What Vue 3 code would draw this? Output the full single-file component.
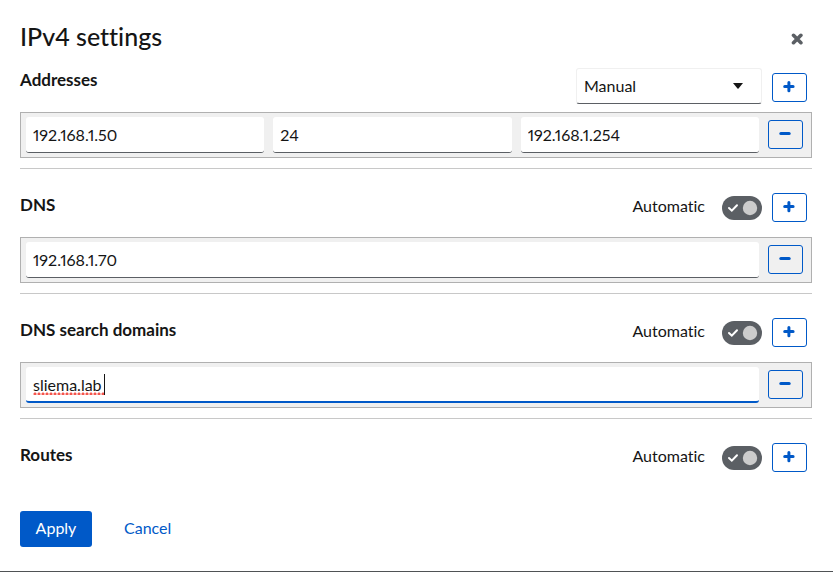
<script setup>
import { ref } from 'vue';

const method = ref('manual');

const sections = ref([
  {
    id: 'addresses',
    title: 'Addresses',
    rows: [[
      { label: 'Address', value: '192.168.1.50' },
      { label: 'Prefix length', value: '24' },
      { label: 'Gateway', value: '192.168.1.254' },
    ]],
  },
  { id: 'dns', title: 'DNS', auto: true, rows: [[{ label: 'DNS server', value: '192.168.1.70' }]] },
  {
    id: 'search',
    title: 'DNS search domains',
    auto: true,
    rows: [[{ label: 'Search domain', value: 'sliema.lab', editing: true }]],
  },
  { id: 'routes', title: 'Routes', auto: true, rows: [] },
]);

const addRow = (section) => {
  const count = section.id === 'addresses' ? 3 : 1;
  section.rows.push(Array.from({ length: count }, () => ({ label: section.title, value: '' })));
};

const removeRow = (section, index) => {
  section.rows.splice(index, 1);
};
</script>

<template>
  <form class="dialog" @submit.prevent>
    <header class="dialog-header">
      <h1>IPv4 settings</h1>
      <button type="button" class="btn-close" aria-label="Close">
        <svg viewBox="0 0 12 12" width="12" height="12" aria-hidden="true">
          <path d="M2.5 2.3 9.9 9.7M9.9 2.3 2.5 9.7" />
        </svg>
      </button>
    </header>

    <section v-for="section in sections" :key="section.id" :class="['section', section.id]">
      <div class="section-header">
        <h2>{{ section.title }}</h2>
        <select v-if="section.id === 'addresses'" v-model="method" aria-label="Address method">
          <option value="auto">Automatic</option>
          <option value="manual">Manual</option>
          <option value="shared">Shared</option>
          <option value="disabled">Disabled</option>
        </select>
        <label v-else class="switch">
          <span>Automatic</span>
          <span class="track">
            <input v-model="section.auto" type="checkbox" role="switch">
            <svg viewBox="0 0 40 24" width="40" height="24" aria-hidden="true">
              <path d="M7 12 9.8 14.7 15 9.3" />
              <circle cx="28" cy="12" r="7.2" />
            </svg>
          </span>
        </label>
        <button type="button" class="btn-icon" :aria-label="'Add ' + section.title" @click="addRow(section)">
          <svg viewBox="0 0 13 13" width="13" height="13" aria-hidden="true">
            <path d="M1.7 5.6H10.1M5.9 1.5V9.8" />
          </svg>
        </button>
      </div>

      <div v-for="(row, index) in section.rows" :key="index" class="row">
        <div v-for="(field, i) in row" :key="i" class="field">
          <input
            v-model="field.value"
            type="text"
            :class="{ editing: field.editing }"
            :aria-label="field.label"
          >
          <span v-if="field.editing" class="caret"></span>
        </div>
        <button type="button" class="btn-icon" aria-label="Remove item" @click="removeRow(section, index)">
          <svg viewBox="0 0 13 13" width="13" height="13" aria-hidden="true">
            <path d="M1.8 5.4H10.2" />
          </svg>
        </button>
      </div>
    </section>

    <footer class="dialog-footer">
      <button type="submit" class="btn-primary">Apply</button>
      <button type="button" class="btn-link">Cancel</button>
    </footer>
  </form>
</template>

<style>
body {
  background: #fff;
}
</style>

<style scoped>
* {
  box-sizing: border-box;
}

.dialog {
  padding: 20px 21px 24px 20px;
  border-bottom: 1px solid #4f5255;
  background: #fff;
  color: #151515;
  font-family: Lato, sans-serif;
  font-size: 16px;
  font-variant-ligatures: none;
  line-height: 24px;
}

.dialog-header {
  display: flex;
  justify-content: space-between;
  align-items: flex-start;
  height: 34px;
}

h1 {
  margin: 0;
  font-size: 25px;
  font-weight: 500;
  line-height: 32px;
}

h2 {
  flex: 1;
  margin: 0;
  font-size: 17px;
  font-weight: 700;
  line-height: 24px;
}

button, input, select {
  font: inherit;
}

button {
  padding: 0;
  border: none;
  background: none;
  cursor: pointer;
}

svg {
  display: block;
}

path {
  fill: none;
  stroke: currentColor;
  stroke-width: 3;
  stroke-linecap: round;
}

.btn-close {
  padding: 13px 9px 9px;
  color: #5b5f64;
}

.btn-close path {
  stroke-width: 3.6;
}

.section-header {
  display: flex;
  align-items: flex-start;
  gap: 10px;
  padding: 24px 5px 15px 0;
}

.addresses .section-header {
  padding: 14px 5px 8px 0;
}

.addresses .section-header .btn-icon {
  margin-top: 5px;
}

select {
  width: 186px;
  height: 36px;
  padding: 0 7px;
  border: 1px solid #f0f0f0;
  border-bottom-color: #5b5f64;
  border-radius: 3px;
  appearance: none;
  background: #fff url("data:image/svg+xml,%3Csvg xmlns='http://www.w3.org/2000/svg' viewBox='0 0 10 6'%3E%3Cpath d='M0 0H10L5.5 5.5Q5 6 4.5 5.5Z' fill='%23151515'/%3E%3C/svg%3E") right 18px center / 10px 6px no-repeat;
  color: #151515;
}

.switch {
  display: flex;
  gap: 17px;
  height: 29px;
  line-height: 26px;
}

.track {
  position: relative;
  align-self: center;
  width: 40px;
  height: 24px;
  border-radius: 12px;
  background: #5b5f64;
  color: #fff;
}

.track input {
  position: absolute;
  inset: 0;
  width: 100%;
  height: 100%;
  margin: 0;
  opacity: 0;
}

.track path {
  stroke-width: 2;
}

.track circle {
  fill: #ccc;
}

.btn-icon {
  display: flex;
  flex: none;
  justify-content: center;
  align-items: center;
  width: 35px;
  height: 29px;
  border: 1px solid #0059c8;
  border-radius: 3px;
  color: #0059c8;
}

.row {
  display: flex;
  align-items: flex-start;
  gap: 9px;
  padding: 4px 8px 4px 5px;
  border: 1px solid #b0b0b0;
  background: #f0f0f0;
}

.row .btn-icon {
  margin-top: 3px;
}

.field {
  position: relative;
  flex: 1;
  min-width: 0;
}

.field input {
  display: block;
  width: 100%;
  height: 36px;
  padding: 0 7px;
  border: none;
  border-bottom: 1px solid #5b5f64;
  border-radius: 3px;
  outline: none;
  background: #fff;
  color: #151515;
  font-variant-numeric: proportional-nums;
}

.field input.editing {
  border-bottom: 2px solid #0059c8;
}

/* text cursor of the field being edited, with the spelling mark on its left */
.caret {
  position: absolute;
  top: 7px;
  left: 7px;
  width: 72px;
  height: 21px;
  border-right: 1px solid #151515;
  background: radial-gradient(circle at 2px 2px, #f5554c 1px, transparent 2px) left bottom / 4px 3px repeat-x;
  pointer-events: none;
}

.section:not(:last-of-type)::after {
  content: "";
  display: block;
  margin-top: 10px;
  border-top: 1px solid #c8c8c8;
}

.dialog-footer {
  display: flex;
  gap: 17px;
  padding-top: 24px;
}

.btn-primary, .btn-link {
  min-width: 72px;
  height: 36px;
  padding: 0 15px 2px;
  border-radius: 3px;
}

.btn-primary {
  background: #0059c8;
  color: #fff;
}

.btn-link {
  color: #0059c8;
}
</style>
